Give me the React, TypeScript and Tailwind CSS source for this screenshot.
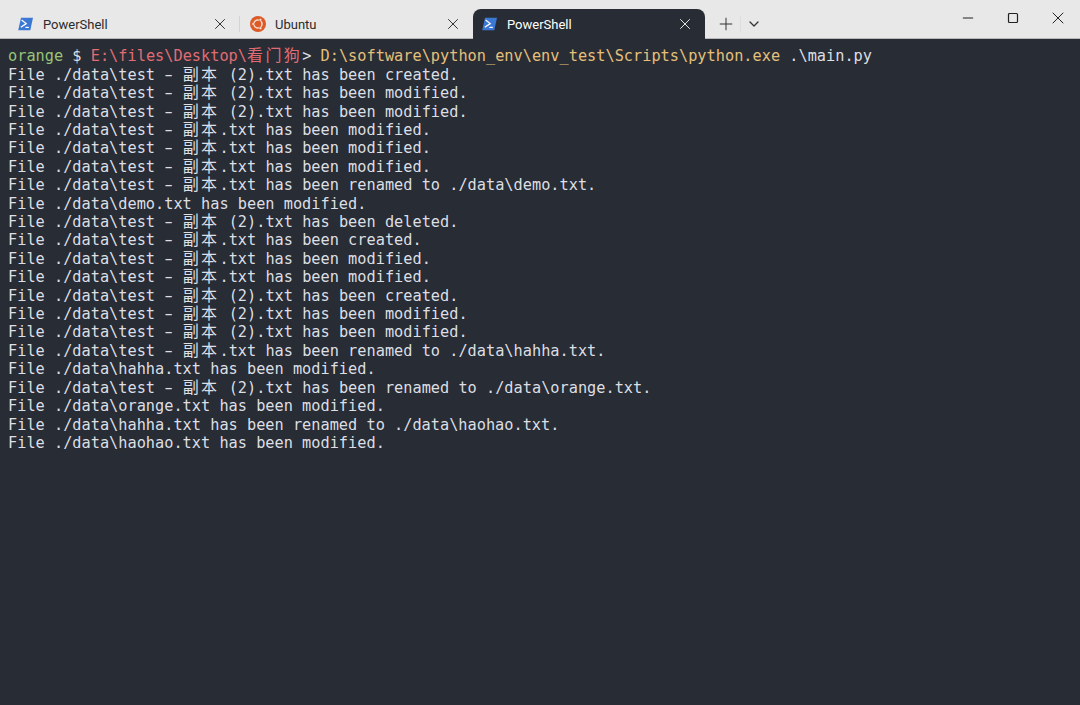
import { Plus, ChevronDown, X, Minus, Square } from 'lucide-react';

const created = 'has been created.';
const modified = 'has been modified.';

const lines = [
  `File ./data\\test - 副本 (2).txt ${created}`,
  `File ./data\\test - 副本 (2).txt ${modified}`,
  `File ./data\\test - 副本 (2).txt ${modified}`,
  `File ./data\\test - 副本.txt ${modified}`,
  `File ./data\\test - 副本.txt ${modified}`,
  `File ./data\\test - 副本.txt ${modified}`,
  'File ./data\\test - 副本.txt has been renamed to ./data\\demo.txt.',
  `File ./data\\demo.txt ${modified}`,
  'File ./data\\test - 副本 (2).txt has been deleted.',
  `File ./data\\test - 副本.txt ${created}`,
  `File ./data\\test - 副本.txt ${modified}`,
  `File ./data\\test - 副本.txt ${modified}`,
  `File ./data\\test - 副本 (2).txt ${created}`,
  `File ./data\\test - 副本 (2).txt ${modified}`,
  `File ./data\\test - 副本 (2).txt ${modified}`,
  'File ./data\\test - 副本.txt has been renamed to ./data\\hahha.txt.',
  `File ./data\\hahha.txt ${modified}`,
  'File ./data\\test - 副本 (2).txt has been renamed to ./data\\orange.txt.',
  `File ./data\\orange.txt ${modified}`,
  'File ./data\\hahha.txt has been renamed to ./data\\haohao.txt.',
  `File ./data\\haohao.txt ${modified}`,
];

// CJK glyphs take exactly two terminal cells, the dash is drawn wider than DejaVu's
function Cells({ text }: { text: string }) {
  return (
    <>
      {text.split(/([\u4e00-\u9fff]| - )/).map((part, i) => {
        if (part === ' - ') {
          return (
            <span key={i}>
              {' '}
              <span className="inline-block scale-x-[1.6]">-</span>{' '}
            </span>
          );
        }
        if (/[\u4e00-\u9fff]/.test(part)) {
          return (
            <span key={i} className="inline-block w-[18.4px] text-left text-[16px] leading-none">
              {part}
            </span>
          );
        }
        return <span key={i}>{part}</span>;
      })}
    </>
  );
}

function PowerShellIcon() {
  return (
    <svg width="15" height="14" viewBox="0 0 15 14" className="shrink-0">
      <path d="M3 .8h12L12.3 13.2H.2z" fill="#3b78d4" />
      <path d="M3.6 3l4.6 3.6-5.4 3.6" fill="none" stroke="#fff" strokeWidth="1.3" />
      <path d="M7.4 10.4h3.4" stroke="#fff" strokeWidth="1.2" />
    </svg>
  );
}

function UbuntuIcon() {
  return (
    <svg width="16" height="16" viewBox="0 0 16 16" className="shrink-0">
      <circle cx="8" cy="8" r="8" fill="#dc5a26" />
      <circle cx="8" cy="8" r="4" fill="none" stroke="#f6d9c9" strokeWidth="1.6" />
      <circle cx="3.2" cy="8" r="1.4" fill="#f6e6dc" stroke="#dc5a26" strokeWidth="0.6" />
      <circle cx="10.4" cy="3.8" r="1.4" fill="#f6e6dc" stroke="#dc5a26" strokeWidth="0.6" />
      <circle cx="10.4" cy="12.2" r="1.4" fill="#f6e6dc" stroke="#dc5a26" strokeWidth="0.6" />
    </svg>
  );
}

function Tab({ label, icon, active, wide }: { label: string; icon: React.ReactNode; active?: boolean; wide?: boolean }) {
  return (
    <div
      className={
        active
          ? 'flex h-[30px] w-[232px] items-center rounded-t-lg bg-[#282c34] pl-[9px] pr-[11px] text-white'
          : wide
            ? 'flex h-[30px] w-[233px] items-center pl-[10px] pr-[11px] text-[#2b2b2b]'
            : 'flex h-[30px] w-[232px] items-center pl-[10px] pr-[11px] text-[#2b2b2b]'
      }
    >
      <span className="flex w-[15px] justify-center">{icon}</span>
      <span className="ml-[10px] mt-[2px] flex-1 font-['Roboto',sans-serif] text-[13px]">{label}</span>
      <X
        size={18}
        absoluteStrokeWidth
        strokeWidth={1}
        className={active ? 'text-[#e4e4e4]' : 'text-[#333]'}
      />
    </div>
  );
}

export default function App() {
  return (
    <div className="flex h-[705px] w-[1080px] flex-col overflow-hidden bg-[#282c34]">
      <div className="flex h-[39px] items-end justify-between border-b border-[#b8b8b8] bg-[#e8e8e8] pl-[8px]">
        <div className="-mb-px flex items-end">
          <Tab label="PowerShell" icon={<PowerShellIcon />} />
          <div className="-ml-px mb-[7px] h-[16px] w-px bg-[#d4d4d4]" />
          <Tab label="Ubuntu" icon={<UbuntuIcon />} wide />
          <Tab label="PowerShell" icon={<PowerShellIcon />} active />
          <div className="flex h-[30px] items-center pl-[9px] text-[#333]">
            <span className="flex w-[23px] justify-center">
              <Plus size={20} absoluteStrokeWidth strokeWidth={1} />
            </span>
            <div className="ml-[3px] h-[16px] w-px bg-[#dedede]" />
            <span className="ml-[5px] flex w-[16px] justify-center">
              <ChevronDown size={16} absoluteStrokeWidth strokeWidth={1.3} />
            </span>
          </div>
        </div>
        <div className="mb-[10px] flex h-[20px] items-center self-end text-[#222]">
          <span className="flex w-[45px] justify-center">
            <Minus size={16} absoluteStrokeWidth strokeWidth={1.2} />
          </span>
          <span className="flex w-[45px] justify-center">
            <Square size={12} absoluteStrokeWidth strokeWidth={1.2} />
          </span>
          <span className="flex w-[45px] justify-center">
            <X size={20} absoluteStrokeWidth strokeWidth={1} />
          </span>
        </div>
      </div>
      <div className="whitespace-pre px-[8px] pt-[8.4px] font-['DejaVu_Sans_Mono','Noto_Sans_CJK_SC',monospace] text-[15.28px] leading-[18.4px] text-[#dcdfe4]">
        <div>
          <span className="text-[#98c379]">orange</span>
          <span> $ </span>
          <span className="text-[#e06c75]">
            <Cells text="E:\files\Desktop\看门狗" />
          </span>
          <span>&gt; </span>
          <span className="text-[#e5c07b]">D:\software\python_env\env_test\Scripts\python.exe</span>
          <span> .\main.py</span>
        </div>
        {lines.map((line, i) => (
          <div key={i}>
            <Cells text={line} />
          </div>
        ))}
      </div>
    </div>
  );
}
